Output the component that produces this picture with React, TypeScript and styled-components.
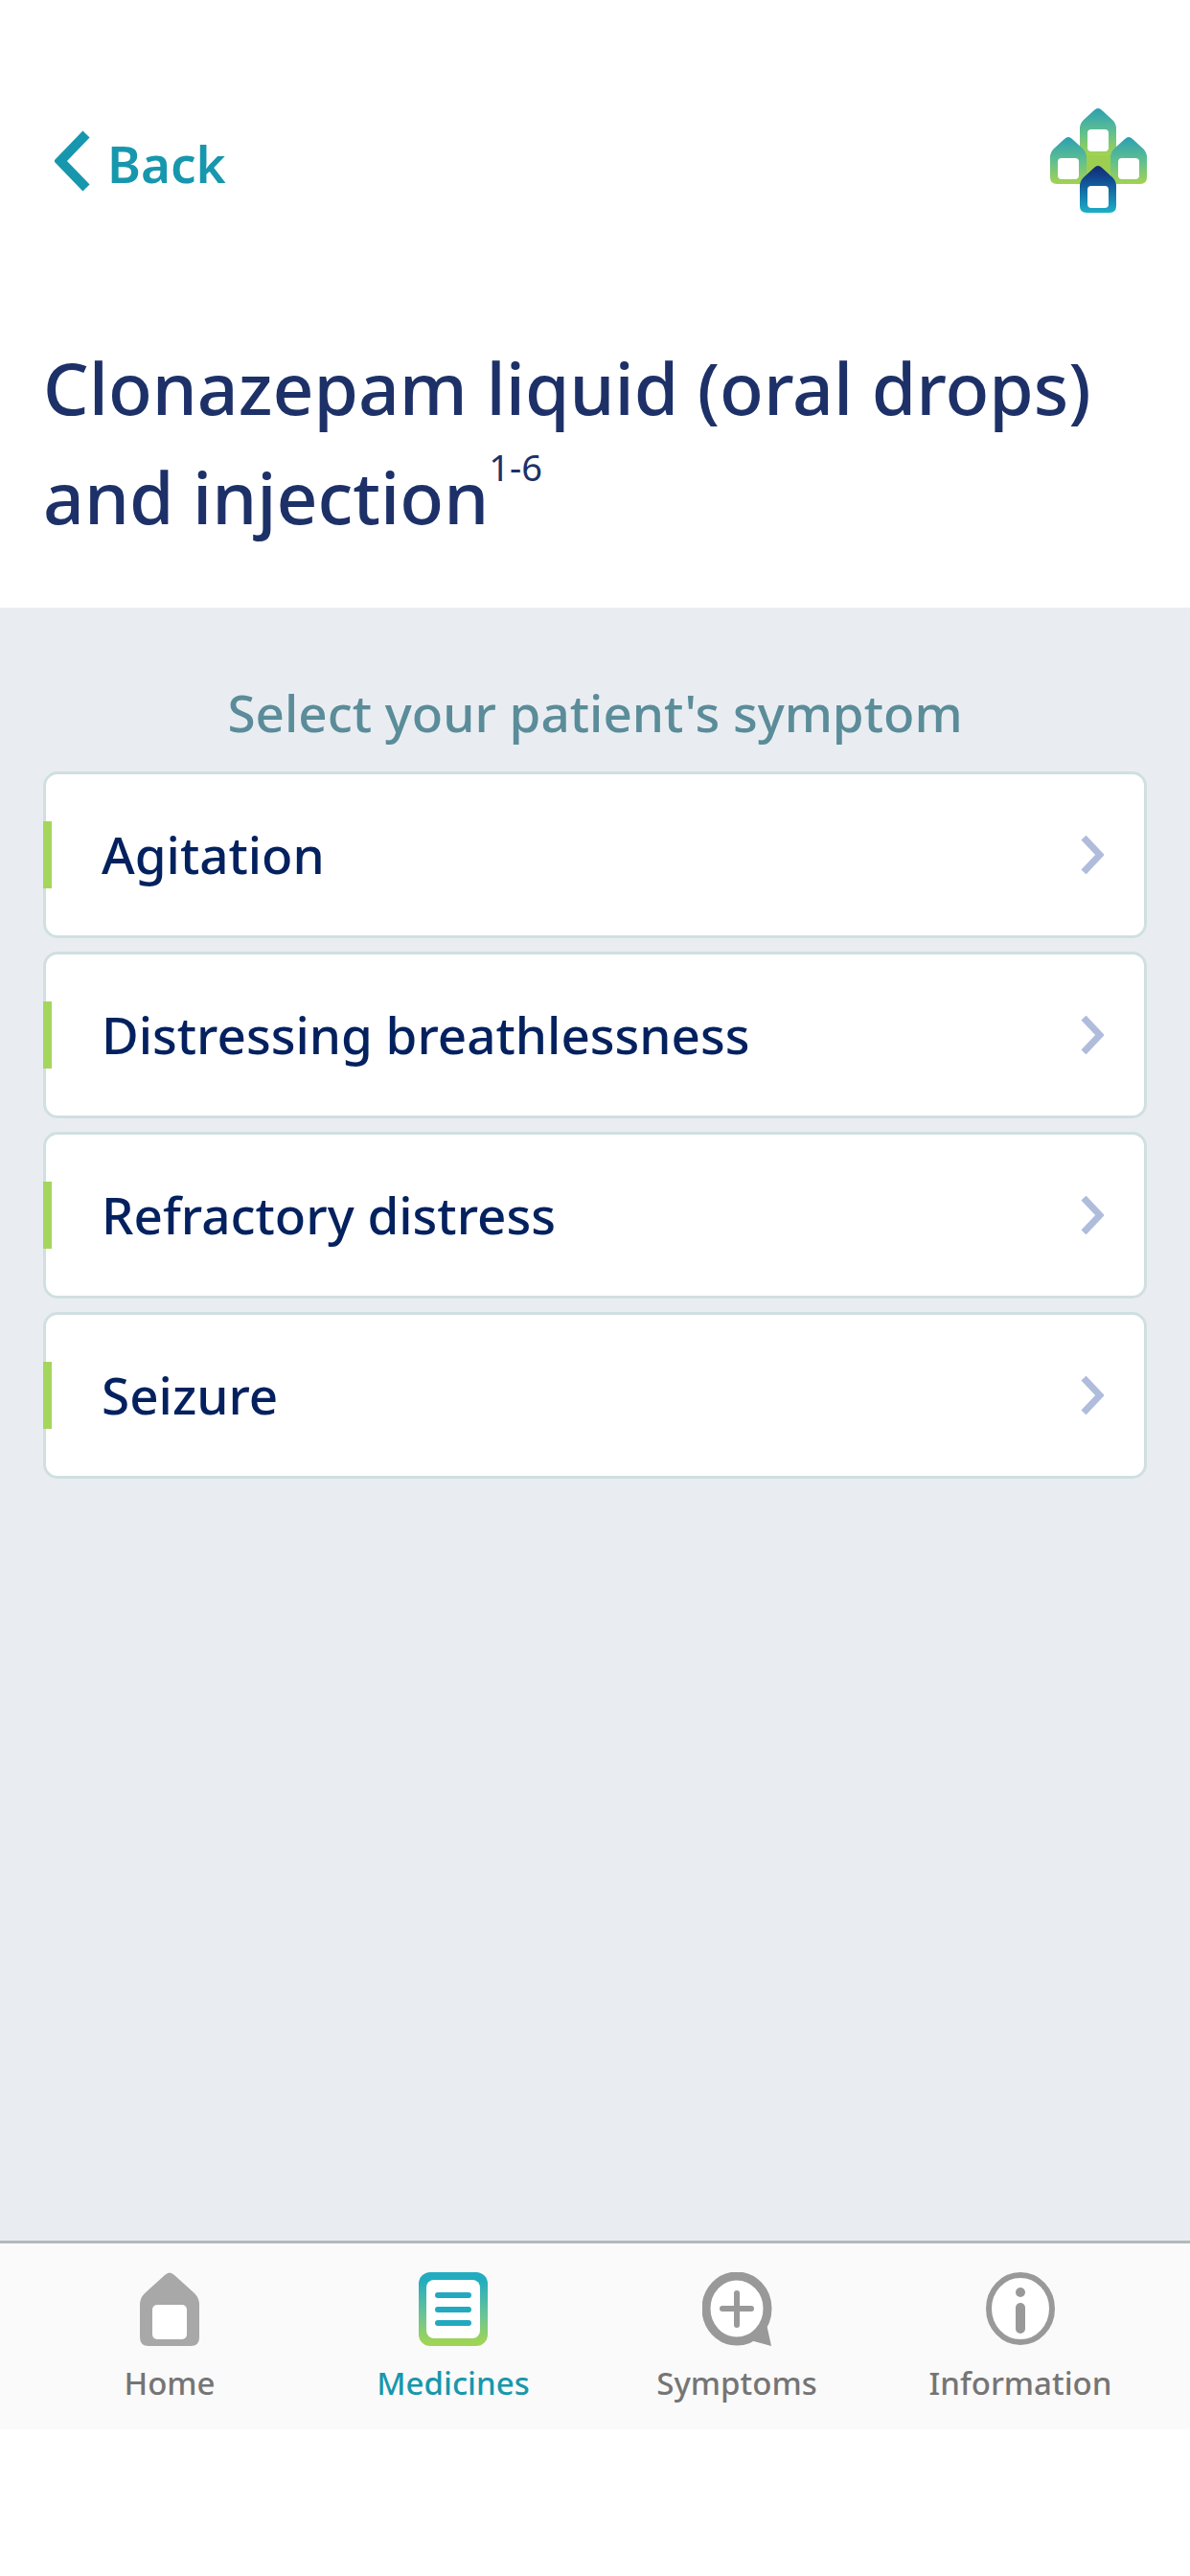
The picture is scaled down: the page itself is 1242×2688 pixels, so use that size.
import React from 'react';
import styled, { createGlobalStyle } from 'styled-components';

const colors = {
  teal: '#1797ad',
  heading: '#1d3168',
  navy: '#04215f',
  slate: '#5b8c99',
  canvas: '#e9edf1',
  cardBorder: '#d0dfe0',
  green: '#a5d65c',
  chevron: '#b0bcdc',
  icon: '#999999',
  label: '#757575',
};

const GlobalStyle = createGlobalStyle`
  *, *::before, *::after { box-sizing: border-box; }
  body {
    margin: 0;
    background: #ffffff;
    font-family: 'Noto Sans', 'Open Sans', sans-serif;
    font-weight: 500;
  }
`;

const Screen = styled.div`
  display: flex;
  flex-direction: column;
  min-height: 100vh;
  padding-bottom: 153px;
`;

const Header = styled.header`
  padding: 113px 45px 59px;
`;

const TopBar = styled.div`
  display: flex;
  align-items: center;
  justify-content: space-between;
`;

const BackButton = styled.button`
  display: flex;
  align-items: center;
  gap: 18px;
  padding: 0 12px;
  border: 0;
  background: none;
  color: ${colors.teal};
  font: inherit;
  font-size: 53px;
  font-weight: 600;
  line-height: 80px;
  cursor: pointer;
`;

const BackLabel = styled.span`
  padding-top: 6px;
`;

const Title = styled.h1`
  margin: 124px 0 0;
  color: ${colors.heading};
  font-size: 75px;
  font-weight: 500;
  line-height: 114px;
`;

const Reference = styled.sup`
  font-size: 38px;
  font-weight: 400;
  line-height: 0;
  vertical-align: 45px;
`;

const Main = styled.main`
  flex: 1;
  padding: 70px 45px 48px;
  background: ${colors.canvas};
`;

const Prompt = styled.h2`
  margin: 0 0 21px;
  color: ${colors.slate};
  font-size: 53px;
  font-weight: 500;
  line-height: 80px;
  text-align: center;
`;

const SymptomList = styled.ul`
  display: flex;
  flex-direction: column;
  gap: 14px;
  margin: 0;
  padding: 0;
  list-style: none;
`;

const SymptomCard = styled.a`
  position: relative;
  display: flex;
  align-items: center;
  justify-content: space-between;
  min-height: 174px;
  padding: 0 42px 0 58px;
  border: 3px solid ${colors.cardBorder};
  border-radius: 15px;
  background: #ffffff;
  color: ${colors.navy};
  font-size: 53px;
  line-height: 80px;
  text-decoration: none;

  &::before {
    content: '';
    position: absolute;
    top: 50%;
    left: -3px;
    width: 9px;
    height: 70px;
    margin-top: -35px;
    background: ${colors.green};
  }
`;

const TabBar = styled.nav`
  display: grid;
  grid-template-columns: repeat(4, 1fr);
  padding: 30px 29px 23px;
  border-top: 3px solid #b3b9bb;
  background: #fafafa;
`;

const Tab = styled.a<{ $active?: boolean }>`
  display: flex;
  flex-direction: column;
  align-items: center;
  gap: 14px;
  color: ${(p) => (p.$active ? colors.teal : colors.label)};
  font-size: 33px;
  line-height: 50px;
  text-decoration: none;
`;

const HOUSE =
  'M26 3 Q31 -2 36 3 L57 22 Q62 27 62 34 V68 Q62 77 53 77 H9 Q0 77 0 68 V34 Q0 27 5 22 Z';

function Logo() {
  const body = 'M15 2 Q19 -2 23 2 L34 12 Q38 16 38 21 V42 Q38 49 31 49 H7 Q0 49 0 42 V21 Q0 16 4 12 Z';
  return (
    <svg width="101" height="110" viewBox="0 0 101 110" role="img" aria-label="Palliative medicines">
      <defs>
        <linearGradient id="leaf" x1="0" y1="0" x2="0" y2="1">
          <stop offset="0" stopColor="#2b9fb2" />
          <stop offset="0.5" stopColor="#5fbf91" />
          <stop offset="1" stopColor="#a3d34f" />
        </linearGradient>
        <linearGradient id="deep" x1="0" y1="0" x2="0" y2="1">
          <stop offset="0" stopColor="#112a72" />
          <stop offset="0.3" stopColor="#114c93" />
          <stop offset="1" stopColor="#1cb0c8" />
        </linearGradient>
      </defs>
      <path d="M31 30 H69 V64 L50 80 L31 70 Z" fill="#9ccf50" />
      <path d={body} transform="translate(31 0)" fill="url(#leaf)" />
      <path d={body} transform="translate(0 30)" fill="url(#leaf)" />
      <path d={body} transform="translate(63 30)" fill="url(#leaf)" />
      <path d={body} transform="translate(31 60)" fill="url(#deep)" />
      <g fill="#ffffff">
        <rect x="39" y="22" width="22" height="23" rx="4" />
        <rect x="8" y="52" width="22" height="22" rx="4" />
        <rect x="71" y="52" width="22" height="22" rx="4" />
        <rect x="39" y="81" width="22" height="23" rx="4" />
      </g>
    </svg>
  );
}

function BackIcon() {
  return (
    <svg width="37" height="64" viewBox="0 0 37 64" aria-hidden="true">
      <path d="M33 4 L6 32 L33 60" fill="none" stroke="currentColor" strokeWidth="10" />
    </svg>
  );
}

function ChevronIcon() {
  return (
    <svg width="24" height="40" viewBox="0 0 24 40" aria-hidden="true">
      <path d="M3 2 L20 20 L3 38" fill="none" stroke={colors.chevron} strokeWidth="7" />
    </svg>
  );
}

function HomeIcon() {
  return (
    <svg width="62" height="77" viewBox="0 0 62 77" aria-hidden="true">
      <path d={HOUSE} fill="#a8a8a8" />
      <rect x="13" y="34" width="36" height="36" rx="5" fill="#ffffff" />
    </svg>
  );
}

function MedicinesIcon() {
  return (
    <svg width="72" height="77" viewBox="0 0 72 77" aria-hidden="true">
      <defs>
        <linearGradient id="sheet" x1="0" y1="0" x2="0" y2="1">
          <stop offset="0.1" stopColor="#22acc0" />
          <stop offset="0.6" stopColor="#6cc593" />
          <stop offset="0.95" stopColor="#9fd455" />
        </linearGradient>
      </defs>
      <rect width="72" height="77" rx="12" fill="url(#sheet)" />
      <rect x="8" y="8" width="56" height="61" rx="8" fill="#ffffff" />
      <path d="M20 24 H52 M20 39 H52 M20 53 H52" stroke="#22a9c0" strokeWidth="6" strokeLinecap="round" />
    </svg>
  );
}

function SymptomsIcon() {
  return (
    <svg width="73" height="77" viewBox="0 0 73 77" aria-hidden="true">
      <path d="M67 54 L72 77 L50 71 Z" fill={colors.icon} />
      <ellipse cx="36" cy="38" rx="32" ry="34" fill="#ffffff" stroke={colors.icon} strokeWidth="9" />
      <path d="M36 22 V55 M21 38 H51" stroke={colors.icon} strokeWidth="6" strokeLinecap="round" />
    </svg>
  );
}

function InformationIcon() {
  return (
    <svg width="73" height="77" viewBox="0 0 73 77" aria-hidden="true">
      <ellipse cx="36" cy="38" rx="33" ry="35" fill="#ffffff" stroke={colors.icon} strokeWidth="6" />
      <circle cx="36" cy="21" r="5" fill={colors.icon} />
      <path d="M36 37 V59" stroke={colors.icon} strokeWidth="10" strokeLinecap="round" />
    </svg>
  );
}

const symptoms = ['Agitation', 'Distressing breathlessness', 'Refractory distress', 'Seizure'];

const tabs = [
  { label: 'Home', Icon: HomeIcon },
  { label: 'Medicines', Icon: MedicinesIcon, active: true },
  { label: 'Symptoms', Icon: SymptomsIcon },
  { label: 'Information', Icon: InformationIcon },
];

export default function App() {
  return (
    <>
      <GlobalStyle />
      <Screen>
        <Header>
          <TopBar>
            <BackButton type="button">
              <BackIcon />
              <BackLabel>Back</BackLabel>
            </BackButton>
            <Logo />
          </TopBar>
          <Title>
            Clonazepam liquid (oral drops) and injection<Reference>1-6</Reference>
          </Title>
        </Header>
        <Main>
          <Prompt>Select your patient's symptom</Prompt>
          <SymptomList>
            {symptoms.map((name) => (
              <li key={name}>
                <SymptomCard href="#">
                  {name}
                  <ChevronIcon />
                </SymptomCard>
              </li>
            ))}
          </SymptomList>
        </Main>
        <TabBar aria-label="Sections">
          {tabs.map(({ label, Icon, active }) => (
            <Tab key={label} href="#" $active={active} aria-current={active ? 'page' : undefined}>
              <Icon />
              {label}
            </Tab>
          ))}
        </TabBar>
      </Screen>
    </>
  );
}
